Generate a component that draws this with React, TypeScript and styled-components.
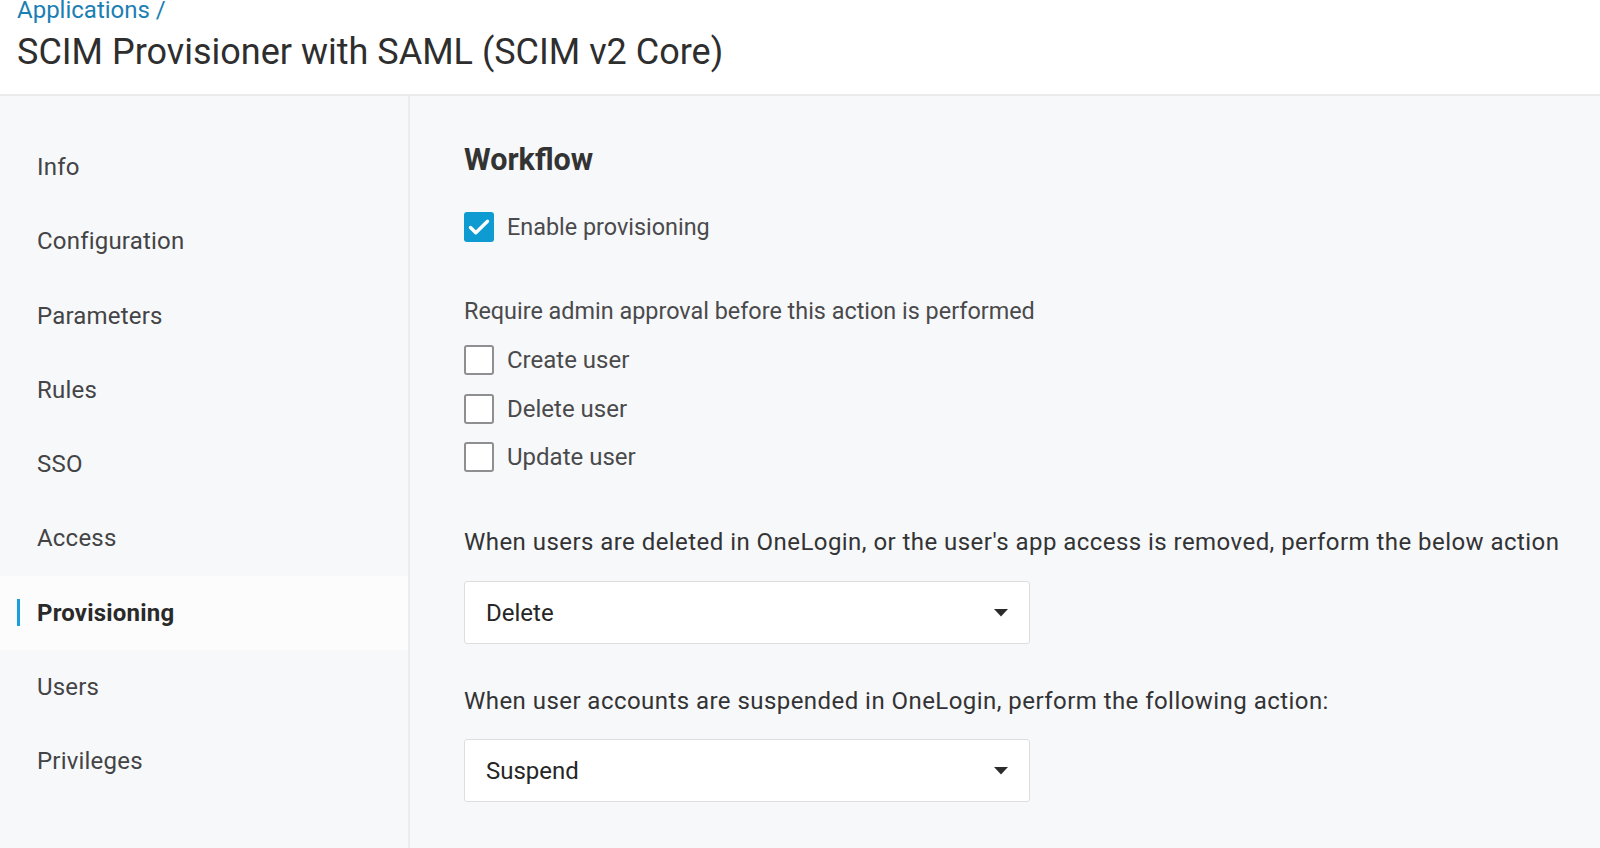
import React from "react";
import styled, { createGlobalStyle } from "styled-components";

const Global = createGlobalStyle`
  html, body { margin: 0; padding: 0; }
  body {
    background: #f7f8fa;
    font-family: Roboto, "Liberation Sans", Arial, sans-serif;
    color: #333;
  }
  * { box-sizing: border-box; }
`;

const Page = styled.div`
  display: flex;
  flex-direction: column;
  min-height: 848px;
  overflow: hidden;
`;

const Header = styled.header`
  background: #ffffff;
  height: 96px;
  border-bottom: 2px solid #ebebec;
  padding-left: 17px;
  display: flex;
  flex-direction: column;
`;

const Breadcrumb = styled.a`
  font-size: 24px;
  line-height: 21px;
  color: #1b7fb3;
  text-decoration: none;
`;

const Title = styled.h1`
  margin: 9px 0 0;
  font-size: 36px;
  line-height: 44px;
  font-weight: 400;
  color: #2e2e2e;
`;

const Body = styled.div`
  display: flex;
  flex: 1;
`;

const Sidebar = styled.nav`
  width: 410px;
  flex-shrink: 0;
  border-right: 2px solid #ececee;
  padding-top: 34px;
  display: flex;
  flex-direction: column;
`;

const NavItem = styled.div<{ $active?: boolean }>`
  height: 74.25px;
  display: flex;
  align-items: center;
  padding-left: 17px;
  gap: 17px;
  font-size: 24px;
  letter-spacing: 0.2px;
  font-weight: ${(p) => (p.$active ? 700 : 400)};
  color: ${(p) => (p.$active ? "#2a2a2a" : "#444446")};
  background: ${(p) => (p.$active ? "#fcfcfd" : "transparent")};
`;

const NavBar = styled.span<{ $active?: boolean }>`
  width: 3px;
  height: 27px;
  background: ${(p) => (p.$active ? "#19a0dc" : "transparent")};
`;

const Main = styled.main`
  flex: 1;
  padding: 46px 0 0 54px;
  display: flex;
  flex-direction: column;
`;

const SectionTitle = styled.h2`
  margin: 0;
  font-size: 30.5px;
  line-height: 36px;
  font-weight: 700;
  color: #333;
`;

const CheckRow = styled.label<{ $small?: boolean }>`
  display: flex;
  align-items: center;
  gap: 13px;
  height: 30px;
  font-size: ${(p) => (p.$small ? "23.4px" : "24px")};
  color: #4a4a4c;
`;

const Box = styled.span<{ $checked?: boolean }>`
  width: 30px;
  height: 30px;
  border-radius: 3px;
  flex-shrink: 0;
  display: flex;
  align-items: center;
  justify-content: center;
  background: ${(p) => (p.$checked ? "#0d9bd1" : "#ffffff")};
  border: ${(p) => (p.$checked ? "none" : "2px solid #8f8f91")};
`;

const Group = styled.div<{ $mt: number; $gap?: number }>`
  margin-top: ${(p) => p.$mt}px;
  display: flex;
  flex-direction: column;
  gap: ${(p) => p.$gap ?? 0}px;
`;

const Label = styled.p<{ $mt: number; $size?: number; $spacing?: number }>`
  margin: ${(p) => p.$mt}px 0 0;
  font-size: ${(p) => p.$size ?? 24}px;
  letter-spacing: ${(p) => p.$spacing ?? 0}px;
  line-height: 28px;
  color: ${(p) => (p.$size && p.$size < 24 ? "#4a4a4c" : "#333335")};
`;

const Select = styled.div<{ $mt: number }>`
  margin-top: ${(p) => p.$mt}px;
  width: 566px;
  height: 63px;
  background: #ffffff;
  border: 1px solid #dedee0;
  border-radius: 3px;
  display: flex;
  align-items: center;
  justify-content: space-between;
  padding: 0 21px 0 21px;
  font-size: 24px;
  color: #262626;
`;

const Caret = () => (
  <svg width="14" height="8" viewBox="0 0 14 8" aria-hidden>
    <path d="M0 0 H14 L7 7.5 Z" fill="#2b2b2b" />
  </svg>
);

const Check = () => (
  <svg width="30" height="30" viewBox="0 0 30 30" aria-hidden>
    <path
      d="M6.5 15.5 L11.8 20.8 L23.5 9.2"
      fill="none"
      stroke="#ffffff"
      strokeWidth="3.4"
      strokeLinecap="round"
      strokeLinejoin="round"
    />
  </svg>
);

const navItems = [
  "Info",
  "Configuration",
  "Parameters",
  "Rules",
  "SSO",
  "Access",
  "Provisioning",
  "Users",
  "Privileges",
];

export default function App() {
  return (
    <Page>
      <Global />
      <Header>
        <Breadcrumb href="#">Applications /</Breadcrumb>
        <Title>SCIM Provisioner with SAML (SCIM v2 Core)</Title>
      </Header>
      <Body>
        <Sidebar>
          {navItems.map((n) => (
            <NavItem key={n} $active={n === "Provisioning"}>
              <NavBar $active={n === "Provisioning"} />
              {n}
            </NavItem>
          ))}
        </Sidebar>
        <Main>
          <SectionTitle>Workflow</SectionTitle>
          <Group $mt={34}>
            <CheckRow $small>
              <Box $checked>
                <Check />
              </Box>
              Enable provisioning
            </CheckRow>
          </Group>
          <Label $mt={55} $size={23.4}>
            Require admin approval before this action is performed
          </Label>
          <Group $mt={20} $gap={18.5}>
            <CheckRow>
              <Box />
              Create user
            </CheckRow>
            <CheckRow>
              <Box />
              Delete user
            </CheckRow>
            <CheckRow>
              <Box />
              Update user
            </CheckRow>
          </Group>
          <Label $mt={56} $spacing={0.45}>
            When users are deleted in OneLogin, or the user's app access is removed, perform the below action
          </Label>
          <Select $mt={25}>
            Delete
            <Caret />
          </Select>
          <Label $mt={43} $spacing={0.45}>
            When user accounts are suspended in OneLogin, perform the following action:
          </Label>
          <Select $mt={24}>
            Suspend
            <Caret />
          </Select>
        </Main>
      </Body>
    </Page>
  );
}
